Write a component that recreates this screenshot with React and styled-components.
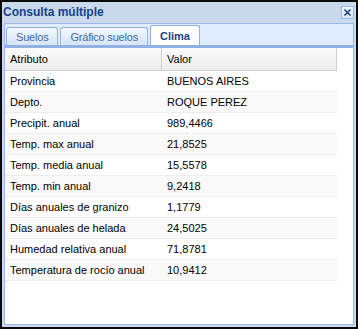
import { Fragment } from "react";
import styled, { createGlobalStyle } from "styled-components";

const Global = createGlobalStyle`
  html, body {
    margin: 0;
    padding: 0;
    background: #000;
  }
  body {
    font-family: "Liberation Sans", Arial, sans-serif;
    font-size: 11px;
  }
`;

const Window = styled.div`
  box-sizing: border-box;
  width: 358px;
  height: 329px;
  border: 2px solid #0b0b0b;
  background: #cad9ec;
  display: flex;
  flex-direction: column;
`;

const TitleBar = styled.div`
  height: 20px;
  display: flex;
  align-items: center;
  justify-content: space-between;
  padding: 0 2px 1px 1px;
`;

const Title = styled.span`
  font-weight: bold;
  font-size: 12px;
  color: #15428b;
`;

const CloseButton = styled.div`
  width: 13px;
  height: 13px;
  box-sizing: border-box;
  border: 1px solid #99bbe8;
  background: linear-gradient(#f4f8fd, #d9e6f6);
  display: flex;
  align-items: center;
  justify-content: center;
`;

const Body = styled.div`
  flex: 1;
  display: flex;
  flex-direction: column;
  padding: 0 2px 2px 2px;
`;

const TabStrip = styled.div`
  display: flex;
  align-items: flex-end;
  gap: 2px;
  height: 21px;
  padding-left: 1px;
  background: #deecfd;
  border: 1px solid #99bbe8;
  border-bottom: none;
`;

const Tab = styled.div`
  box-sizing: border-box;
  height: ${p => (p.active ? "20px" : "18px")};
  padding: 0 9px;
  display: flex;
  align-items: center;
  font-size: 11px;
  letter-spacing: ${p => (p.active ? "0" : "-0.2px")};
  border: 1px solid #8db2e3;
  border-bottom: none;
  border-radius: 3px 3px 0 0;
  font-weight: ${p => (p.active ? "bold" : "normal")};
  color: ${p => (p.active ? "#15428b" : "#416aa3")};
  background: ${p =>
    p.active ? "#fff" : "linear-gradient(#f2f7fd, #d7e5f7)"};
`;

const Panel = styled.div`
  flex: 1;
  background: #fff;
  border: 1px solid #99bbe8;
  border-top: 3px solid #8db2e3;
  padding-right: 16px;
  display: flex;
  flex-direction: column;
`;

const Grid = styled.div`
  display: grid;
  grid-template-columns: 157px 1fr;
`;

const HeaderCell = styled.div`
  height: 22px;
  display: flex;
  align-items: center;
  padding-left: 5px;
  background: linear-gradient(#fbfbfb, #ececec);
  border-bottom: 1px solid #d0d0d0;
  border-right: 1px solid #d0d0d0;
  color: #000;
`;

const Cell = styled.div`
  height: 20px;
  display: flex;
  align-items: center;
  padding-left: 5px;
  background: ${p => (p.alt ? "#fafafa" : "#fff")};
  border-bottom: 1px solid #ededed;
  color: #000;
`;

const rows = [
  ["Provincia", "BUENOS AIRES"],
  ["Depto.", "ROQUE PEREZ"],
  ["Precipit. anual", "989,4466"],
  ["Temp. max anual", "21,8525"],
  ["Temp. media anual", "15,5578"],
  ["Temp. min anual", "9,2418"],
  ["Días anuales de granizo", "1,1779"],
  ["Días anuales de helada", "24,5025"],
  ["Humedad relativa anual", "71,8781"],
  ["Temperatura de rocío anual", "10,9412"],
];

export default function App() {
  return (
    <>
      <Global />
      <Window>
        <TitleBar>
          <Title>Consulta múltiple</Title>
          <CloseButton>
            <svg width="9" height="9" viewBox="0 0 9 9">
              <path d="M1.5 1.5L7.5 7.5M7.5 1.5L1.5 7.5" stroke="#15428b" strokeWidth="1.6" />
            </svg>
          </CloseButton>
        </TitleBar>
        <Body>
          <TabStrip>
            <Tab>Suelos</Tab>
            <Tab>Gráfico suelos</Tab>
            <Tab active>Clima</Tab>
          </TabStrip>
          <Panel>
            <Grid>
              <HeaderCell>Atributo</HeaderCell>
              <HeaderCell>Valor</HeaderCell>
              {rows.map(([k, v], i) => (
                <Fragment key={k}>
                  <Cell alt={i % 2 === 1}>{k}</Cell>
                  <Cell alt={i % 2 === 1}>{v}</Cell>
                </Fragment>
              ))}
            </Grid>
          </Panel>
        </Body>
      </Window>
    </>
  );
}
